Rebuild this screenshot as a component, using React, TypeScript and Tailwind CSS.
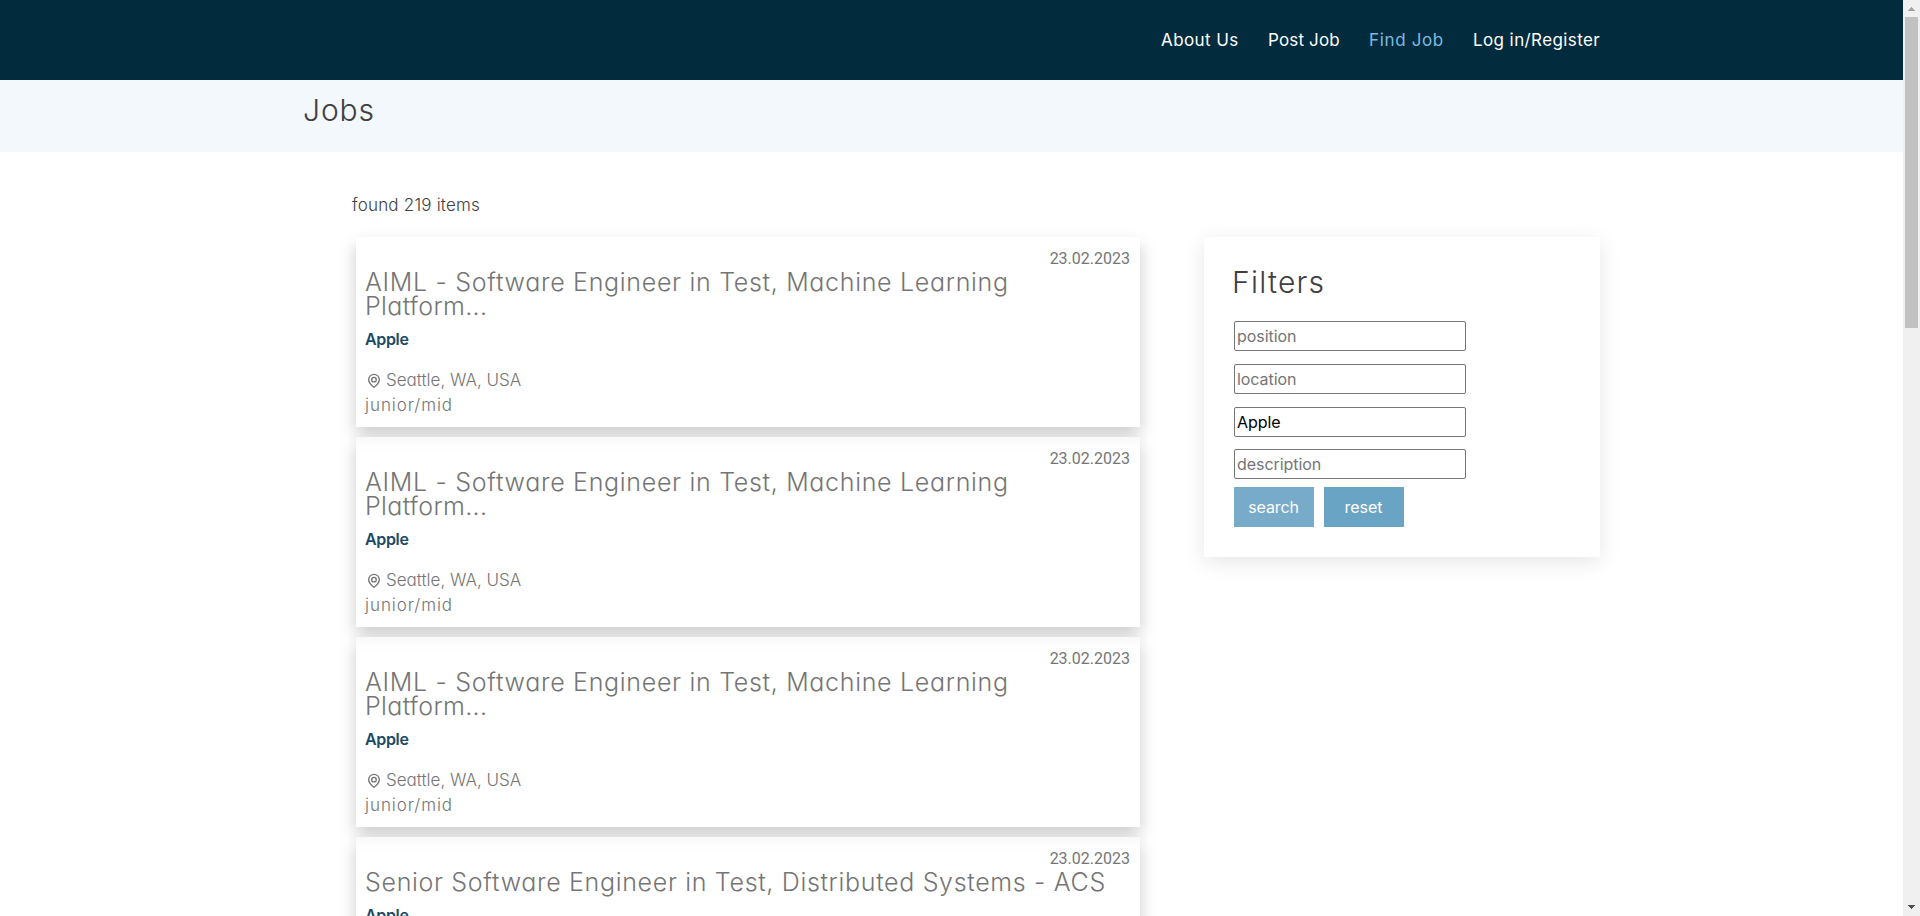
import type { ReactNode } from "react";

const NAV = [
  { label: "About Us", cls: "text-white tracking-[0.4px] w-[107px]" },
  { label: "Post Job", cls: "text-white tracking-[0.15px] w-[101px]" },
  { label: "Find Job", cls: "text-[#7fb9e0] tracking-[0.65px] w-[104px]" },
  { label: "Log in/Register", cls: "text-white tracking-[0.4px] w-[128px]" },
];

const AIML = (
  <>
    <span className="block tracking-[0.69px]">AIML - Software Engineer in Test, Machine Learning</span>
    <span className="block tracking-[0.35px]">Platform...</span>
  </>
);

const JOBS: ReactNode[] = [
  AIML,
  AIML,
  AIML,
  <span className="block tracking-[0.67px]">Senior Software Engineer in Test, Distributed Systems - ACS</span>,
];

function PinIcon() {
  return (
    <svg viewBox="0 0 24 24" className="h-4 w-4" fill="none" stroke="currentColor" strokeWidth="2" strokeLinejoin="round">
      <path d="M12 21.5c-2.600-2.100-8-6.600-8-11.500a8 8 0 0 1 16 0c0 4.900-5.400 9.400-8 11.500z" />
      <circle cx="12" cy="10" r="3.400" />
    </svg>
  );
}

function JobCard({ title }: { title: ReactNode }) {
  return (
    <article className="relative w-[784px] shrink-0 bg-linear-to-b from-[#f9f9f9] to-white to-[14px] px-[9px] pt-[33px] pb-[10px] text-[#757575] shadow-[0_8px_16px_0_rgba(0,0,0,0.2)] first:from-white">
      <time className="absolute top-[10px] right-[10px] font-[Roboto] text-[16px] leading-6">23.02.2023</time>
      <h3 className="text-[25px] leading-6 font-[350] whitespace-nowrap">{title}</h3>
      <div className="pt-[9px] text-[16px] leading-6 font-semibold tracking-[-0.35px] text-[#1c4966]">Apple</div>
      <div className="mt-[17px] flex h-[25px] items-center gap-1 pl-px text-[17px] font-light">
        <PinIcon />
        <span>Seattle, WA, USA</span>
      </div>
      <div className="text-[17px] leading-6 font-light tracking-[0.95px]">junior/mid</div>
    </article>
  );
}

function Field({ placeholder, value }: { placeholder?: string; value?: string }) {
  return (
    <input
      className="block h-[30px] w-[232px] rounded-[2px] border border-[#767676] bg-white px-[2px] text-[16px] tracking-[-0.05px] text-black outline-none placeholder:text-[#757575]"
      placeholder={placeholder}
      defaultValue={value}
    />
  );
}

function Scrollbar() {
  return (
    <div className="flex h-full w-[17px] shrink-0 flex-col items-center bg-[#f0f0f0]">
      <svg className="h-[17px] w-[17px] shrink-0" viewBox="0 0 17 17" shapeRendering="crispEdges">
        <path d="M5 11V10H6V9H7V8H8V7H9V8H10V9H11V10H12V11Z" fill="#a3a3a3" />
      </svg>
      <div className="h-[311px] w-[13px] bg-[#c1c1c1]" />
      <svg className="mt-auto h-[17px] w-[17px] shrink-0" viewBox="0 0 17 17" shapeRendering="crispEdges">
        <path d="M5 6V7H6V8H7V9H8V10H9V9H10V8H11V7H12V6Z" fill="#505050" />
      </svg>
    </div>
  );
}

export default function App() {
  return (
    <div className="flex h-[916px] w-[1920px] overflow-hidden bg-white font-[Inter,sans-serif]">
      <div className="flex h-full w-[1903px] flex-col overflow-hidden [font-feature-settings:'cv11']">
        <header className="flex h-20 shrink-0 justify-end bg-[#022b3e] pr-[302px] pt-7 text-[17px] leading-6">
          {NAV.map((n) => (
            <a key={n.label} className={n.cls + " shrink-0 whitespace-nowrap"}>{n.label}</a>
          ))}
        </header>
        <div className="h-[72px] shrink-0 bg-[#f2f8fb] pt-[10px] pl-[303px]">
          <h1 className="text-[30px] leading-10 font-light tracking-[0.9px] text-[#404040]">Jobs</h1>
        </div>
        <main className="pl-[352px]">
          <p className="mt-[41px] text-[17px] leading-6 font-light tracking-[0.2px] text-[#404040]">found 219 items</p>
          <div className="mt-5 flex items-start pl-1">
            <div className="flex flex-col gap-2.5">
              {JOBS.map((t, i) => (
                <JobCard key={i} title={t} />
              ))}
            </div>
            <aside className="ml-16 h-80 w-[396px] bg-white pt-[25px] pl-[30px] shadow-[0_5px_20px_rgba(0,0,0,0.1)]">
              <h2 className="-ml-[2px] text-[30px] leading-10 font-light tracking-[1.25px] text-[#404040]">Filters</h2>
              <div className="mt-[19px] flex flex-col gap-[13px] [font-feature-settings:normal]">
                <Field placeholder="position" />
                <Field placeholder="location" />
                <Field value="Apple" />
                <div className="-mt-px">
                  <Field placeholder="description" />
                </div>
              </div>
              <div className="mt-2 flex gap-2.5 text-[16px] text-white [font-feature-settings:normal]">
                <button className="h-10 w-20 bg-[#78aaca] pr-px tracking-[-0.1px]">search</button>
                <button className="h-10 w-20 bg-[#69a4c4] pr-px">reset</button>
              </div>
            </aside>
          </div>
        </main>
      </div>
      <Scrollbar />
    </div>
  );
}
